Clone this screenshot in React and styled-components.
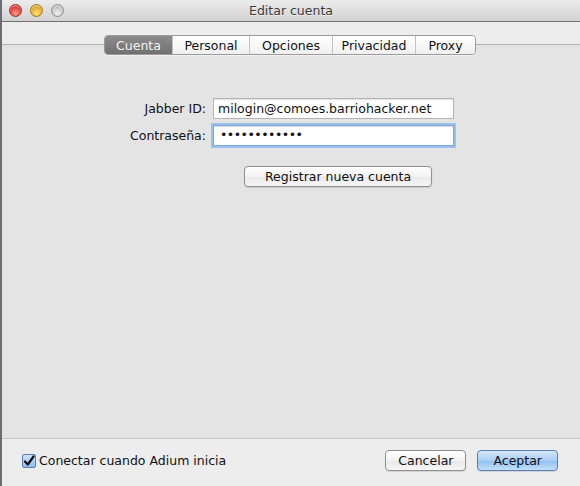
import React, { useState } from 'react';
import styled, { createGlobalStyle } from 'styled-components';

const GlobalStyle = createGlobalStyle`
  html, body { margin: 0; padding: 0; background: #e4e4e4; }
  body { font-family: "DejaVu Sans", "Liberation Sans", sans-serif; }
`;

// --- Window chrome ---

const Window = styled.div`
  width: 580px;
  height: 486px;
  display: flex;
  flex-direction: column;
  box-sizing: border-box;
  border-left: 2px solid #6f6a76;
  background: #e4e4e4;
  overflow: hidden;
`;

const TitleBar = styled.div`
  height: 21px;
  flex: 0 0 21px;
  display: flex;
  align-items: center;
  background: linear-gradient(#ececec, #d2d2d2);
  border-bottom: 1px solid #707070;
`;

const Lights = styled.div`
  display: flex;
  gap: 8px;
  padding-left: 7px;
`;

const Light = styled.span`
  width: 13px;
  height: 13px;
  border-radius: 50%;
  box-sizing: border-box;
  border: 1px solid ${p => p.$edge};
  background: radial-gradient(circle at 50% 75%, ${p => p.$hi} 0%, ${p => p.$base} 70%);
  box-shadow: inset 0 1px 1px rgba(255,255,255,0.6);
`;

const Title = styled.div`
  flex: 1;
  text-align: center;
  margin-left: -62px;
  font-size: 12.5px;
  color: #3a3a3a;
  text-shadow: 0 1px 0 rgba(255,255,255,0.6);
`;

const Toolbar = styled.div`
  height: 22px;
  flex: 0 0 22px;
  background: #ededed;
  border-bottom: 1px solid #b2b2b2;
`;

const Content = styled.div`
  flex: 1;
  display: flex;
  flex-direction: column;
  align-items: center;
  background: #e4e4e4;
`;

// --- Tabs ---

const TabBar = styled.div`
  display: flex;
  margin-top: -10px;
  margin-left: -2px;
  border: 1px solid #9a9a9a;
  border-radius: 4px;
  overflow: hidden;
  box-shadow: 0 1px 0 rgba(255,255,255,0.5);
`;

const Tab = styled.div`
  height: 18px;
  width: ${p => p.$w}px;
  box-sizing: border-box;
  display: flex;
  align-items: center;
  justify-content: center;
  font-size: 12.5px;
  color: ${p => (p.$active ? '#f4f4f4' : '#111')};
  background: ${p => (p.$active
    ? 'linear-gradient(#8c8c8c, #707070)'
    : 'linear-gradient(#ffffff, #f0f0f0)')};
  border-left: ${p => (p.$first ? 'none' : '1px solid #c4c4c4')};
  cursor: default;
`;

// --- Form ---

const Form = styled.div`
  align-self: stretch;
  margin-top: 43px;
  display: grid;
  grid-template-columns: 204px 241px;
  column-gap: 7px;
  row-gap: 6px;
  align-items: center;
`;

const Label = styled.label`
  text-align: right;
  font-size: 12.5px;
  color: #111;
`;

const Field = styled.div`
  height: 21px;
  box-sizing: border-box;
  display: flex;
  align-items: center;
  padding-left: 4px;
  background: #fff;
  font-size: 12.5px;
  color: #111;
  border: 1px solid ${p => (p.$focus ? '#7ea6d8' : '#b4b4b4')};
  box-shadow: ${p => (p.$focus
    ? '0 0 0 2px #9cc0ec, inset 0 1px 1px rgba(0,0,0,0.15)'
    : 'inset 0 1px 1px rgba(0,0,0,0.12)')};
`;

const Dots = styled.span`
  font-size: 12.5px;
  letter-spacing: -0.5px;
  line-height: 1;
  padding-left: 2px;
`;

const Button = styled.button`
  height: 21px;
  box-sizing: border-box;
  padding: 0 ${p => p.$pad}px;
  font-family: inherit;
  font-size: 12.5px;
  color: #111;
  border: 1px solid ${p => (p.$primary ? '#5a7fb8' : '#8f8f8f')};
  border-radius: 4px;
  background: ${p => (p.$primary
    ? 'linear-gradient(#d7e7fb 0%, #a9cdf5 50%, #8ebff3 51%, #c4e0fb 100%)'
    : 'linear-gradient(#ffffff 0%, #f3f3f3 50%, #e8e8e8 51%, #f6f6f6 100%)')};
  box-shadow: 0 1px 1px rgba(0,0,0,0.12);
  cursor: default;
`;

const RegisterRow = styled.div`
  align-self: flex-start;
  margin-top: 20px;
  margin-left: 242px;
`;

// --- Footer ---

const Footer = styled.div`
  height: 48px;
  flex: 0 0 48px;
  box-sizing: border-box;
  display: flex;
  align-items: center;
  padding: 0 22px 4px 20px;
  background: #ededed;
  border-top: 1px solid #c6c6c6;
`;

const Check = styled.label`
  display: flex;
  align-items: center;
  gap: 3px;
  font-size: 12.5px;
  color: #111;
  flex: 1;
`;

const Box = styled.span`
  width: 14px;
  height: 14px;
  box-sizing: border-box;
  border: 1px solid #5c7fb3;
  border-radius: 2px;
  background: linear-gradient(#cfe3fb, #8cbcf0);
  display: flex;
  align-items: center;
  justify-content: center;
`;

const Actions = styled.div`
  display: flex;
  gap: 11px;
`;

const tabs = [
  { name: 'Cuenta', w: 67 },
  { name: 'Personal', w: 77 },
  { name: 'Opciones', w: 83 },
  { name: 'Privacidad', w: 83 },
  { name: 'Proxy', w: 60 },
];

const App = () => {
  const [active, setActive] = useState('Cuenta');

  return (
    <>
      <GlobalStyle />
      <Window>
        <TitleBar>
          <Lights>
            <Light $base="#d9302b" $hi="#ff9a8c" $edge="#9c2a24" />
            <Light $base="#e0a023" $hi="#ffe27a" $edge="#a8761c" />
            <Light $base="#bdbdbd" $hi="#f2f2f2" $edge="#8e8e8e" />
          </Lights>
          <Title>Editar cuenta</Title>
        </TitleBar>
        <Toolbar />
        <Content>
          <TabBar>
            {tabs.map((t, i) => (
              <Tab
                key={t.name}
                $w={t.w}
                $first={i === 0}
                $active={active === t.name}
                onClick={() => setActive(t.name)}
              >
                {t.name}
              </Tab>
            ))}
          </TabBar>

          <Form>
            <Label>Jabber ID:</Label>
            <Field>milogin@comoes.barriohacker.net</Field>
            <Label>Contraseña:</Label>
            <Field $focus>
              <Dots>••••••••••••</Dots>
            </Field>
          </Form>

          <RegisterRow>
            <Button $pad={20}>Registrar nueva cuenta</Button>
          </RegisterRow>
        </Content>
        <Footer>
          <Check>
            <Box>
              <svg width="12" height="12" viewBox="0 0 12 12">
                <path d="M2 6.5 L4.8 9.5 L10.5 1.5" fill="none" stroke="#111" strokeWidth="2.2" strokeLinecap="round" strokeLinejoin="round" />
              </svg>
            </Box>
            Conectar cuando Adium inicia
          </Check>
          <Actions>
            <Button $pad={12}>Cancelar</Button>
            <Button $pad={15} $primary>Aceptar</Button>
          </Actions>
        </Footer>
      </Window>
    </>
  );
};

export default App;
